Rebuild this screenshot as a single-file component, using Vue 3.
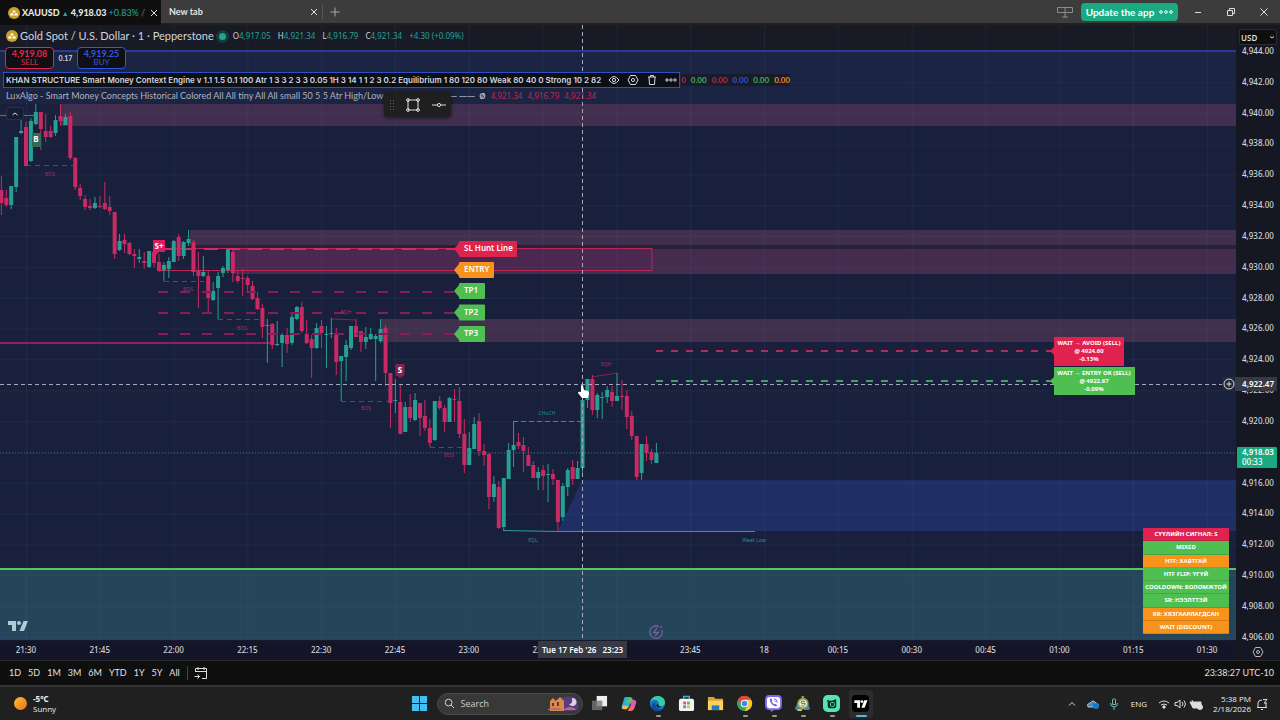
<script setup>
const START = 26
const STEP = 4.925
const FIRST = -5

// direction, high, body top, body bottom, low
const series = `
r176,190,203,215 r190,198,205,207 g186,186,205,209 g137,137,187,192 g120,131,133,134
r122,127,166,166 g118,121,161,162 g104,112,124,125 r112,112,129,150 r114,131,137,142
r126,131,137,138 g115,120,133,136 r104,116,121,125 g114,117,125,125 r112,116,158,160
r157,158,187,190 r184,188,196,200 r195,199,207,210 r199,206,208,210 g197,203,208,209
r196,206,207,208 r182,203,209,210 r196,207,211,215 r212,212,254,259 g234,241,250,251
r234,240,244,253 r242,243,254,255 r249,254,256,268 g249,257,259,263 r252,261,263,269
g251,251,267,268 r251,252,263,267 r254,262,271,272 g262,265,270,281 g257,261,269,278
g240,241,262,262 r234,237,256,261 g241,242,256,259 g230,239,243,246 r240,242,272,276
r252,271,276,308 g256,272,276,277 r271,276,298,312 g282,291,300,301 g272,276,288,319
g266,268,273,277 g249,250,270,273 r249,252,273,282 r270,276,281,283 r269,278,279,296
r276,278,285,291 r281,286,299,300 r292,298,309,310 r304,308,327,338 g319,325,326,363
r323,324,345,349 g321,344,345,346 g333,335,343,367 r328,335,344,353 g314,317,343,345
g306,307,319,320 r302,307,331,333 r320,334,343,344 r335,339,348,378 g323,328,348,349
r320,326,333,348 g326,334,335,368 g318,333,334,338 r328,333,362,375 g356,356,361,401
g340,345,357,381 g326,326,348,350 r319,326,337,337 r331,331,342,352 g327,337,342,349
g328,334,339,340 g334,336,339,381 g319,329,341,343 r325,328,373,386 r373,373,403,428
g379,400,401,413 r385,402,434,434 g402,407,432,432 r394,407,418,422 g393,400,420,421
r403,403,418,436 r400,416,428,431 r419,428,443,447 g401,401,440,441 r396,401,408,410
r405,408,422,432 g397,398,422,422 r389,399,400,422 r387,401,434,438 r419,434,465,473
g432,448,465,465 g417,424,449,449 r413,421,451,456 r444,451,455,466 r453,454,497,509
g476,484,497,502 r481,487,528,529 g478,478,527,531 g443,450,479,479 g422,445,450,467
r433,442,446,449 r437,445,451,472 r447,455,466,466 r461,465,478,478 g467,472,478,490
r465,470,476,490 g464,474,475,502 r469,474,479,485 r480,480,522,531 g483,486,517,521
g468,470,487,496 r460,467,479,485 g461,468,479,479 g396,400,468,476 g379,379,400,408
r375,379,410,415 g393,395,410,418 g392,397,398,419 g386,390,397,403 r386,392,401,407
g373,396,401,401 r380,396,397,410 r390,396,417,429 r411,416,436,440 r436,436,477,480
g444,444,473,480 r436,444,453,461 r449,452,460,464 g443,453,463,463`

const candles = series.trim().split(/\s+/).map((s, i) => {
  const [high, top, bottom, low] = s.slice(1).split(',').map(Number)
  return { x: START + (i + FIRST) * STEP, up: s[0] === 'g', high, top, bottom, low }
})

const prices = Array.from({ length: 20 }, (_, i) => '4,' + (944 - i * 2) + '.00')
const times = ['21:30', '21:45', '22:00', '22:15', '22:30', '22:45', '23:00', '23:15', '', '23:45', '18', '00:15', '00:30', '00:45', '01:00', '01:15', '01:30']
const hGrid = Array.from({ length: 20 }, (_, i) => 51.5 + i * 30.84)
const vGrid = Array.from({ length: 17 }, (_, i) => 26.5 + i * 73.8)

const tags = [
  { y: 249, w: 56, text: 'SL Hunt Line', fill: '#e0234e' },
  { y: 270, w: 33, text: 'ENTRY', fill: '#f7931a' },
  { y: 291, w: 24, text: 'TP1', fill: '#4fbf52' },
  { y: 312.5, w: 24, text: 'TP2', fill: '#4fbf52' },
  { y: 334, w: 24, text: 'TP3', fill: '#4fbf52' },
]
const tiny = [
  [50, 176, 'BOS', 'm'], [188, 291, 'BOS', 'm'], [242, 330, 'BOS', 'm'], [346, 314, 'EQH', 'm'],
  [366, 410, 'BOS', 'm'], [449, 457, 'BOS', 'm'], [606, 366, 'EQH', 'm'],
  [547, 415, 'CHoCH', 't'], [533, 542, 'EQL', 't'], [754, 542, 'Weak Low', 't'],
]
const status = [
  ['СҮҮЛИЙН СИГНАЛ: S', 'red'], ['MIXED', 'green'], ['HTF: ХАВТГАЙ', 'orange'], ['HTF FLIP: ҮГҮЙ', 'green'],
  ['COOLDOWN: БОЛОМЖТОЙ', 'green'], ['SR: НЭЭЛТТЭЙ', 'green'], ['RR: ХЯЗГААРЛАГДСАН', 'orange'], ['WAIT (DISCOUNT)', 'orange'],
]
const ranges = ['1D', '5D', '1M', '3M', '6M', 'YTD', '1Y', '5Y', 'All']
</script>

<template>
  <div class="app">
    <header class="titlebar">
      <div class="tab active">
        <svg class="coin" viewBox="0 0 12 12"><circle cx="6" cy="6" r="6" fill="#c9a227" /><path d="M4.4 5.4 5 3.6h2l.6 1.8zM2 8.4l.7-2.2h2.4l.6 2.2zM6.3 8.4l.6-2.2h2.4l.7 2.2z" fill="#fff" /></svg>
        <span class="tab-title"><b>XAUUSD</b> <i>▲</i> <b>4,918.03</b> <em>+0.83%</em> <small>/</small></span>
        <button class="x" aria-label="Close tab"><svg viewBox="0 0 10 10"><path d="M2 2l6 6M8 2l-6 6" /></svg></button>
      </div>
      <div class="tab second">
        <span class="tab-title">New tab</span>
        <button class="x" aria-label="Close new tab"><svg viewBox="0 0 10 10"><path d="M2 2l6 6M8 2l-6 6" /></svg></button>
      </div>
      <button class="x plus" aria-label="Add tab"><svg viewBox="0 0 10 10"><path d="M5 .5v9M.5 5h9" /></svg></button>
      <div class="window">
        <svg class="layout" viewBox="0 0 16 12"><path d="M.5 1.500h15v5H.5zM8 1.500v10M5 11h6" /></svg>
        <button class="update">Update the app <svg viewBox="0 0 14 4"><circle cx="2" cy="2" r="1.300" /><circle cx="7" cy="2" r="1.300" /><circle cx="12" cy="2" r="1.300" /></svg></button>
        <button class="win" aria-label="Minimize"><svg viewBox="0 0 10 10"><path d="M2 5.500h6" /></svg></button>
        <button class="win" aria-label="Restore"><svg viewBox="0 0 10 10"><path d="M1.500 3.500h5v5h-5zM3.500 3.500v-2h5v5h-2" /></svg></button>
        <button class="win" aria-label="Close"><svg viewBox="0 0 10 10"><path d="M1.500 1.500l7 7M8.500 1.500l-7 7" /></svg></button>
      </div>
    </header>

    <main class="chart">
      <section class="plot">
        <svg class="canvas" viewBox="0 25 1236 615" preserveAspectRatio="xMinYMin slice">
          <rect x="0" y="25" width="1236" height="615" fill="#18203c" />
          <rect x="0" y="25" width="1236" height="26" fill="#181b26" />
          <rect x="0" y="52" width="1236" height="52" fill="#1b2442" />
          <rect x="60" y="104" width="1176" height="22" fill="#422f50" />
          <rect x="190" y="230" width="1046" height="15" fill="#412f4e" />
          <rect x="190" y="245" width="1046" height="4" fill="#281f3e" />
          <rect x="232" y="249" width="1004" height="25" fill="#432c4d" />
          <rect x="232" y="249" width="420" height="21" fill="#4a2850" />
          <rect x="381" y="319" width="855" height="23" fill="#412f4e" />
          <path d="M582 480H1236V531H558z" fill="#1f2f63" />
          <rect x="0" y="569" width="1236" height="71" fill="#24455a" />
          <g class="grid">
            <line v-for="y in hGrid" :key="'h' + y" x1="0" x2="1236" :y1="y" :y2="y" />
            <line v-for="x in vGrid" :key="'v' + x" :x1="x" :x2="x" y1="25" y2="640" />
          </g>
          <rect x="0" y="50" width="1236" height="2" fill="#2c3a94" />
          <rect x="0" y="568" width="1236" height="2" fill="#5cc35c" />
          <path d="M0 115.500h37" stroke="#2a8c8c" />
          <path d="M0 343h270" stroke="#8c2060" stroke-width="2" />
          <path d="M160 248.500H652V270.500H160" fill="none" stroke="#b92855" stroke-width="1" />
          <path d="M160 249h296" stroke="#d42a5c" stroke-width="2" stroke-dasharray="14 8" />
          <path d="M332 319l24 1M592 377l25-4" stroke="#8c2059" />
          <path d="M503 530.500L557 531.500H755" fill="none" stroke="#2a9d9d" />
          <g stroke="#a0245f" stroke-dasharray="5 4"><path d="M26 165.500h47M164 281.500h40M218 319.500h42M341 401.500h49M430 447.500h36" /></g>
          <path d="M513 421.500h69" stroke="#2a9d8f" stroke-dasharray="5 3" />
          <g v-for="c in candles" :key="c.x" :fill="c.up ? '#26a092' : '#c92a63'">
            <rect :x="c.x - 0.5" :y="c.high" width="1" :height="c.low - c.high" />
            <rect :x="c.x - 2" :y="c.top" width="4" :height="Math.max(1, c.bottom - c.top)" />
          </g>
          <g stroke="#8b1a59" stroke-width="2" stroke-dasharray="10 12"><path d="M158 292h297M158 313h297M158 334h297" /></g>
          <path d="M656 351h396" stroke="#b52a5a" stroke-width="2" stroke-dasharray="7 8" />
          <path d="M656 381h396" stroke="#4a9c62" stroke-width="2" stroke-dasharray="7 8" />
          <path d="M0 453h1236" stroke="#27798a" stroke-dasharray="1 2" />
          <text v-for="t in tiny" :key="t[0]" :x="t[0]" :y="t[1]" :class="['tiny', t[3]]">{{ t[2] }}</text>

          <path d="M153 240h12v12h-6l-4 4v-4h-2z" fill="#d81f5c" /><text x="159" y="249" class="mark">S+</text>
          <path d="M395.500 364h9v11l-4.500 3-4.500-3z" fill="#83234f" /><text x="400" y="373" class="mark">S</text>
          <rect x="32" y="133" width="9" height="14" fill="#336b58" /><text x="36" y="142" class="mark">B</text>

          <g v-for="t in tags" :key="t.text">
            <path :d="`M454 ${t.y}l5-6v-1q0-1 1-1h${t.w}q1 0 1 1v14q0 1-1 1h-${t.w}q-1 0-1-1v-1z`" :fill="t.fill" />
            <text x="464" :y="t.y + 2" class="tag">{{ t.text }}</text>
          </g>

          <path d="M1050 351l4-4v-10h70v29h-70v-11z" fill="#e0234e" />
          <path d="M1050 381l4-4v-10h81v28h-81v-10z" fill="#4fbf52" />
          <g class="callout">
            <text x="1089" y="345">WAIT → AVOID (SELL)</text><text x="1089" y="353">@ 4924.60</text><text x="1089" y="361">-0.13%</text>
            <text x="1094" y="375">WAIT → ENTRY OK (SELL)</text><text x="1094" y="383">@ 4922.67</text><text x="1094" y="391">-0.09%</text>
          </g>

          <path d="M582.500 25V640M0 384.500H1054M1135 384.500H1222" stroke="#a4a8b8" stroke-dasharray="4 3" />
          <g transform="translate(656 632)" fill="none" stroke="#76609b" stroke-width="1.300"><path d="M3-5.500A6.300 6.300 0 1 0 6-2M1-4l-3.500 4.500h5L-1 4" /><circle cx="5" cy="-5" r="1" fill="#b04a86" stroke="none" /></g>
          <path d="M8 621h8v10h-4v-6H8zM23.500 621h4.500l-4 10h-4.500z" fill="#a9ced6" /><circle cx="19" cy="623" r="2" fill="#a9ced6" />
          <path d="M581 386q1-2 2 0l1 4 4 1q1.500 1 1 3l-1 4h-6l-4-5q0-2 3-1z" fill="#fff" />
        </svg>

        <div class="legend">
          <div class="symbol">
            <svg class="coin" viewBox="0 0 12 12"><circle cx="6" cy="6" r="6" fill="#c9a227" /><path d="M4.400 5.400 5 3.600h2l.6 1.800zM2 8.400l.7-2.200h2.400l.6 2.200zM6.300 8.400l.6-2.200h2.400l.7 2.200z" fill="#fff" /></svg>
            <h1>Gold Spot / U.S. Dollar · 1 · Pepperstone</h1>
            <span class="dot"></span>
            <p class="ohlc"><span>O<b>4,917.05</b></span><span>H<b>4,921.34</b></span><span>L<b>4,916.79</b></span><span>C<b>4,921.34</b></span><b>+4.30 (+0.09%)</b></p>
          </div>
          <div class="trade">
            <button class="sell"><b>4,919.08</b>SELL</button>
            <span>0.17</span>
            <button class="buy"><b>4,919.25</b>BUY</button>
          </div>
          <div class="study">
            <div class="picked">
              <span>KHAN STRUCTURE Smart Money Context Engine v 1.1 1.5 0.1 100 Atr 1 3 3 2 3 3 0.05 1H 3 14 1 1 2 3 0.2 Equilibrium 1 80 120 80 Weak 80 40 0 Strong 10 2 82</span>
              <button aria-label="Hide"><svg viewBox="0 0 12 12"><path d="M1 6q5-7 10 0-5 7-10 0z" /><circle cx="6" cy="6" r="1.600" /></svg></button>
              <button aria-label="Settings"><svg viewBox="0 0 12 12"><path d="M3.500 1.500h5L11 6l-2.500 4.500h-5L1 6z" /><circle cx="6" cy="6" r="1.600" /></svg></button>
              <button aria-label="Remove"><svg viewBox="0 0 12 12"><path d="M2 3h8M4.500 3V1.500h3V3M3 3l.5 7.500h5L9 3" /></svg></button>
              <button aria-label="More"><svg viewBox="0 0 12 12"><circle cx="2" cy="6" r="1.200" /><circle cx="6" cy="6" r="1.200" /><circle cx="10" cy="6" r="1.200" /></svg></button>
            </div>
            <p class="values"><i class="r">0</i><i class="g">0.00</i><i class="r">0.00</i><i class="b">0.00</i><i class="g">0.00</i><i class="o">0.00</i></p>
          </div>
          <div class="lux">
            <span>LuxAlgo - Smart Money Concepts Historical Colored All All tiny All All small 50 5 5 Atr High/Low 3</span>
            <p>— —— &nbsp;<b>Ø</b> <i>4,921.34</i> <i>4,916.79</i> <i>4,921.34</i></p>
          </div>
          <button class="fold" aria-label="Collapse legend"><svg viewBox="0 0 10 10"><path d="M2.500 6L5 4l2.500 2" /></svg></button>
        </div>

        <div class="floating">
          <svg class="grip" viewBox="0 0 6 14"><path d="M1.500 2v10M4.500 2v10" stroke-dasharray="1 2" /></svg>
          <button aria-label="Rectangle"><svg viewBox="0 0 16 16"><path d="M3 3h10v10H3z" /><circle cx="3" cy="3" r="1.400" /><circle cx="13" cy="3" r="1.400" /><circle cx="3" cy="13" r="1.400" /><circle cx="13" cy="13" r="1.400" /></svg></button>
          <button aria-label="Line"><svg viewBox="0 0 16 16"><path d="M1 8h5M10 8h5" /><circle cx="8" cy="8" r="1.600" /></svg></button>
        </div>

        <table class="status">
          <tbody><tr v-for="s in status" :key="s[0]"><td :class="s[1]">{{ s[0] }}</td></tr></tbody>
        </table>
      </section>

      <aside class="axis">
        <div class="prices"><span v-for="p in prices" :key="p" :class="{ covered: p === '4,918.00' }">{{ p }}</span></div>
        <label class="currency"><select aria-label="Currency"><option>USD</option></select><svg viewBox="0 0 8 8"><path d="M2 3.500l2 1.500 2-1.500" /></svg></label>
        <div class="cross"><button aria-label="Add alert"><svg viewBox="0 0 12 12"><circle cx="6" cy="6" r="5" /><path d="M6 3.500v5M3.500 6h5" /></svg></button><b>4,922.47</b></div>
        <div class="last"><b>4,918.03</b>00:33</div>
        <button class="gear" aria-label="Scale settings"><svg viewBox="0 0 12 12"><path d="M3.500 1.500h5L11 6l-2.500 4.500h-5L1 6z" /><circle cx="6" cy="6" r="1.500" /></svg></button>
      </aside>

      <div class="timeline">
        <div class="times"><span v-for="(t, i) in times" :key="i">{{ t }}</span></div>
        <div class="cursor-time">Tue 17 Feb '26 <span>23:23</span></div>
      </div>
    </main>

    <nav class="ranges">
      <button v-for="r in ranges" :key="r">{{ r }}</button>
      <button class="goto" aria-label="Go to date"><svg viewBox="0 0 14 14"><path d="M1.500 6V2.500h11v10H8M1.500 5.500h11M4 1v3M10 1v3M.5 10.500h5M3.500 8.500l2 2-2 2" /></svg></button>
      <time>23:38:27 UTC-10</time>
    </nav>

    <footer class="taskbar">
      <div class="weather"><span class="sun"></span><p><b>-5°C</b>Sunny</p></div>
      <div class="apps">
        <button aria-label="Start"><svg viewBox="0 0 18 18"><path d="M1 1h7.500v7.500H1zM9.500 1H17v7.500H9.500zM1 9.500h7.500V17H1zM9.500 9.500H17V17H9.500z" fill="#43bdf2" /></svg></button>
        <label class="search">
          <svg viewBox="0 0 12 12"><circle cx="5" cy="5" r="3.700" /><path d="M7.700 7.700L11 11" /></svg>
          <input type="text" placeholder="Search" aria-label="Search" />
          <svg class="art" viewBox="0 0 34 18"><path d="M3 14Q10 2 20 2q10-2 13 6t-8 8H4z" fill="#5b3a80" /><path d="M5 16V6l3-3 3 3 4-4 4 4v10z" fill="#d98b4a" /><path d="M7 8h2v3H7zM12 7h2v4h-2z" fill="#6b3324" /><path d="M2 15q8-5 16 0 6-6 14 0z" fill="#b96b72" /><path d="M27 3a4 4 0 1 1-3 6q4 0 3-6" fill="#d9d0f2" /></svg>
        </label>
        <button aria-label="Task view"><svg viewBox="0 0 18 18"><path d="M6 1h11v11H6z" fill="#eee" /><path d="M1 6h11v10H1z" fill="#777" opacity=".8" /></svg></button>
        <button aria-label="Copilot"><svg viewBox="0 0 18 18"><path d="M6 2h5q2 0 1 3l-2 7q-1 3-3 3H4q-3 0-2-4l2-6q0-3 2-3" fill="#28a9e0" /><path d="M9 3h3q2 0 1 3l-1 3H5z" fill="#54c66b" /><path d="M12 5h2q4 0 3 4l-2 5q-1 3-3 3H8q2 0 3-4z" fill="#d65cc0" /><path d="M3 11h6l-2 4H4q-3 0-1-4" fill="#f4b63d" /><path d="M8 17l3-5h5l-1 2q-1 3-3 3z" fill="#f3695c" /></svg></button>
        <button class="on" aria-label="Edge"><svg viewBox="0 0 18 18"><circle cx="9" cy="9" r="8" fill="#1475c8" /><path d="M1 9C2-2 17-1 17 8q0 4-5 4-3 0-2-3 0-4-4-4-4 0-5 4" fill="#39cba0" /><path d="M7 8q-2 7 7 7-3 2-6 2-6-1-5-6 1-3 4-3" fill="#0d4b99" /><path d="M10 9q-1 3 3 3-3 3-5 0-1-2 2-3" fill="#202020" /></svg></button>
        <button aria-label="Store"><svg viewBox="0 0 18 18"><path d="M6 4V1.500h6V4" fill="none" stroke="#42aee8" stroke-width="1.500" /><rect x="1" y="4" width="16" height="13" rx="2" fill="#f3f3f3" /><path d="M5.500 7h3v3h-3z" fill="#e65a3a" /><path d="M9.500 7h3v3h-3z" fill="#70b33e" /><path d="M5.500 11h3v3h-3z" fill="#35a0dc" /><path d="M9.500 11h3v3h-3z" fill="#f0b82f" /></svg></button>
        <button aria-label="Files"><svg viewBox="0 0 18 18"><path d="M1 2h6l2 2h8v12H1z" fill="#dba52c" /><path d="M1 6h16v10H1z" fill="#fad35e" /><path d="M5 11h8v5H5z" fill="#2a79bd" /></svg></button>
        <button class="on" aria-label="Chrome"><svg viewBox="0 0 18 18"><circle cx="9" cy="9" r="8" fill="#31a852" /><path d="M2 5a8 8 0 0 1 14 0H9L6 10z" fill="#e8453a" /><path d="M9 17a8 8 0 0 0 7-12H9l4 5z" fill="#f8c82f" /><circle cx="9" cy="9" r="4" fill="#fff" /><circle cx="9" cy="9" r="3" fill="#4286ed" /></svg></button>
        <button class="on" aria-label="Viber"><svg viewBox="0 0 18 18"><path d="M4 0h10q4 0 4 5v6q0 5-6 5h-2l-4 2v-2q-6 0-6-5V5q0-5 4-5" fill="#7b66ef" /><path d="M5 2h8q3 0 3 3v6q0 3-4 3H6q-4 0-4-3V5q0-3 3-3" fill="#fff" /><path d="M5.500 4q1-1 2 1 .5 1-.5 1.500Q8 9 10 10q1-1 2 0 1.500 1 0 2-4 0-6.500-5-.5-2 0-3" fill="#6a56db" /><path d="M9.500 4q3 0 3.500 4M10 6q1 .5 1 1.500" fill="none" stroke="#6a56db" /></svg></button>
        <button class="on" aria-label="Wallet"><svg viewBox="0 0 18 18"><path d="M1 14l3-6 4 8H2zM17 14l-3-6-4 8h6z" fill="#3f7fc0" /><path d="M8 1h3l-1 3H8z" fill="#78a94a" /><circle cx="9.500" cy="9" r="6" fill="#90a95a" /><circle cx="9.500" cy="9" r="4" fill="#e9e7d0" /><path d="M11.500 7q-4-1.500-4 .5t3 1.500-.5 2.500H8" fill="none" stroke="#586d35" /><path d="M3 15h6l-1 2H4z" fill="#ecc546" /></svg></button>
        <button class="on" aria-label="Recorder"><svg viewBox="0 0 18 18"><rect x="0" y="0" width="18" height="18" rx="5" fill="#58e3b2" /><path d="M4 5q5 2 8 0 2-2 2 1v6q0 2-2 2H7q-2 0-2-2V8z" fill="#122d27" /><rect x="8" y="8" width="4" height="4" rx="1" fill="none" stroke="#58e3b2" /></svg></button>
        <button class="on current" aria-label="TradingView"><svg viewBox="0 0 18 18"><rect x="0" y="0" width="18" height="18" rx="4" fill="#000" /><path d="M2.500 5.500h6v8H5.500v-5h-3zM13 5.500h3.500l-3.200 8H10z" fill="#fff" /><circle cx="10.500" cy="7" r="1.500" fill="#fff" /></svg></button>
      </div>
      <div class="tray">
        <div class="icons">
          <svg viewBox="0 0 14 12"><path d="M4 7.500l3-3 3 3" /></svg>
          <svg viewBox="0 0 14 12"><path d="M2 9q-2-3 2-4 3-4 6 0 4 1 2 4z" fill="#4b86b5" stroke="#a7c5da" /><circle cx="10" cy="8" r="3" fill="#1679ce" stroke="none" /></svg>
          <svg viewBox="0 0 14 12"><path d="M5.500 1.500q1.500-1.500 3 0v5h-3zM3.500 5q0 4 3.500 4t3.500-4M7 9v3" stroke="#72b5c0" /></svg>
        </div>
        <span>ENG</span>
        <div class="system">
          <svg viewBox="0 0 14 12"><path d="M2 5q5-4 10 0M4 7q3-2 6 0" /><circle cx="7" cy="9" r="1.200" fill="#ddd" /></svg>
          <svg viewBox="0 0 14 12"><path d="M2 4.500h2L7 2v8L4 7.500H2zM9 4q2 2 0 4M11 2.500q3 3.500 0 7" /></svg>
          <svg viewBox="0 0 14 12"><path d="M1 4h11v6H4zM3 2l3 7" fill="#ddd" /><circle cx="11" cy="9" r="2.500" fill="#ddd" /></svg>
        </div>
        <p>5:38 PM<br />2/18/2026</p>
        <svg viewBox="0 0 14 12"><path d="M3 9V5q0-3 4-3M11 5v4M2 9.500h10M6 11.500h2M8 1.500h4L9 5h3" /></svg>
      </div>
    </footer>
  </div>
</template>

<style>
html, body { margin: 0; background: #0f0f0f; }
</style>

<style scoped>
* { box-sizing: border-box; }
.app { display: flex; flex-direction: column; height: 100vh; overflow: hidden; color: #d1d3da; font: 9px/12px "Trebuchet MS", Lato, "Noto Sans", sans-serif; }
button { font: inherit; color: inherit; background: none; border: 0; padding: 0; margin: 0; display: flex; align-items: center; justify-content: center; }
svg { display: block; flex: none; }
p, h1 { margin: 0; }
i, em { font-style: normal; }

.titlebar { display: flex; align-items: stretch; height: 25px; flex: none; background: #3c3c3c; border-bottom: 2px solid #202020; }
.tab { display: flex; align-items: center; gap: 2px; font-weight: 700; white-space: nowrap; color: #e4e4e4; }
.tab.active { width: 161px; background: #0f0f0f; padding-left: 8px; margin-bottom: -2px; }
.tab.second { width: 161px; padding-left: 8px; }
.tab-title { flex: 1; }
.active i { color: #22ab94; font-size: 7px; }
.active em { color: #22ab94; font-weight: 400; }
.active small { color: #5c6068; font-size: 9px; }
.active .x { width: 14px; }
.coin { width: 12px; height: 12px; }
.x { width: 16px; height: 16px; align-self: center; }
.x svg { width: 10px; height: 10px; }
.x path, .win path { fill: none; stroke: #ddd; stroke-width: 1; }
.plus { border-left: 1px solid #575757; width: 24px; }
.plus path { stroke: #aaa; }
.window { margin-left: auto; display: flex; align-items: center; }
.layout { width: 16px; height: 12px; fill: none; stroke: #8c8c8c; margin-right: 8px; }
.update { background: #19aa82; color: #fff; border-radius: 4px; height: 18px; width: 97px; font-weight: 700; font-size: 10px; gap: 5px; margin-right: 3px; white-space: nowrap; }
.update svg { width: 14px; height: 4px; fill: none; stroke: #fff; stroke-width: 1; }
.win { width: 33px; height: 20px; }
.win svg { width: 10px; height: 10px; }

.chart { flex: 1; min-height: 0; display: grid; grid-template-columns: 1fr 44px; grid-template-rows: 1fr 20px; }
.plot { position: relative; overflow: hidden; }
.canvas { position: absolute; inset: 0; width: 100%; height: 100%; font-family: "Noto Sans", sans-serif; }
.grid line { stroke: #8c9bd0; stroke-opacity: .08; }
.tiny { font-size: 5px; text-anchor: middle; }
.tiny.m { fill: #a0306c; }
.tiny.t { fill: #2d8d93; }
.mark { font-size: 8px; font-weight: 700; fill: #fff; text-anchor: middle; }
.tag { font-size: 8px; font-weight: 600; fill: #fff; }
.callout text { font-size: 6px; font-weight: 700; fill: #fff; text-anchor: middle; }

.legend { position: absolute; inset: 0 0 auto 0; white-space: nowrap; }
.symbol { display: flex; align-items: center; height: 22px; padding-left: 6px; }
.symbol h1 { font-size: 11px; font-weight: 400; margin: 0 5px 0 2px; }
.dot { width: 7px; height: 7px; border-radius: 50%; background: #22a58b; box-shadow: 0 0 0 3px #173b3e; }
.ohlc { display: flex; gap: 7px; margin-left: 7px; font: 8px/12px "Noto Sans", sans-serif; }
.ohlc b { color: #26a092; font-weight: 400; }
.trade { display: flex; align-items: center; height: 22px; padding-left: 5px; }
.trade span { width: 23px; text-align: center; font-size: 7px; font-weight: 700; }
.trade button { width: 49px; height: 22px; flex-direction: column; border: 1px solid; border-radius: 4px; background: #101014; line-height: 9px; font-size: 8px; }
.trade b { font-size: 9px; }
.sell { color: #e0284a; }
.buy { color: #3156e0; }
.study { display: flex; align-items: center; margin-top: 3px; height: 16px; }
.picked { display: flex; align-items: center; height: 16px; margin-left: 3px; padding: 0 2px; gap: 7px; border: 1px solid #2f4fc4; background: #0d0f16; color: #d4d6de; font-family: Inter, sans-serif; font-size: 8px; font-weight: 600; }
.picked svg { width: 12px; height: 12px; fill: none; stroke: #d8dae2; }
.values { display: flex; gap: 5px; margin-left: 1px; font-weight: 700; font-size: 8px; background: #181c2a; }
.r { color: #b8264e; } .g { color: #45ad5a; } .b { color: #2f52d8; } .o { color: #e78b22; }
.lux { display: flex; align-items: center; height: 16px; padding-left: 6px; color: #afb2bf; }
.lux span { width: 379px; }
.lux p { margin-left: 64px; font: 8px/12px "Noto Sans", sans-serif; }
.lux i { color: #bc2856; margin-left: 3px; }
.fold { position: absolute; left: 6px; top: 82px; width: 18px; height: 13px; background: #161d33; border: 1px solid #2c3246; border-radius: 2px; }
.fold svg { width: 10px; height: 10px; fill: none; stroke: #ddd; }
.floating { position: absolute; left: 384px; top: 67px; width: 67px; height: 25px; display: flex; align-items: center; gap: 9px; padding-left: 5px; background: #1f1f1f; border-radius: 3px; box-shadow: 0 1px 4px #0008; }
.floating .grip { width: 6px; height: 14px; stroke: #666; }
.floating button svg { width: 16px; height: 16px; fill: none; stroke: #ddd; }
.floating button { width: 17px; }
.status { position: absolute; right: 6px; bottom: 6px; width: 88px; height: 106px; border-spacing: 1px 0; color: #fff; font: 700 6px/10px "Noto Sans", sans-serif; text-align: center; white-space: nowrap; }
.status td { padding: 0; border-bottom: 1px solid #0002; }
.status .red { background: #e0234e; } .status .green { background: #4fbf52; } .status .orange { background: #f7931a; }

.axis { grid-row: 1 / 3; grid-column: 2; position: relative; display: flex; flex-direction: column; background: #151723; font: 500 8px/12px "Noto Sans", sans-serif; }
.prices { flex: 1; display: flex; flex-direction: column; justify-content: space-between; padding: 20px 0 0 6px; }
.prices span { height: 12px; }
.prices .covered { visibility: hidden; }
.currency { position: absolute; top: 4px; left: 3px; right: 3px; height: 16px; }
.currency select { appearance: none; width: 100%; height: 100%; background: #0f0f0f; border: 1px solid #2e2e2e; border-radius: 2px; color: #ddd; font: 600 8px "Noto Sans", sans-serif; padding: 0 1px; }
.currency svg { position: absolute; right: 1px; top: 4px; width: 8px; height: 8px; fill: none; stroke: #ddd; }
.cross { position: absolute; right: 3px; top: 352px; height: 14px; display: flex; align-items: center; background: #363a45; color: #fff; padding-right: 3px; }
.cross button { width: 13px; height: 14px; margin-right: 7px; background: #232838; }
.cross svg { width: 12px; height: 12px; fill: none; stroke: #ddd; }
.cross b, .last b { font-weight: 600; display: block; }
.last { position: absolute; left: 1px; right: 3px; top: 422px; height: 21px; padding-left: 5px; line-height: 10px; background: #19aa82; color: #fff; border-radius: 1px; }
.gear { height: 17px; }
.gear svg { width: 12px; height: 12px; fill: none; stroke: #bbb; }

.timeline { grid-column: 1; grid-row: 2; position: relative; overflow: hidden; background: #141528; border-top: 1px solid #171a2c; font: 500 8px/18px "Noto Sans", sans-serif; }
.times { display: grid; grid-template-columns: repeat(17, 1fr); margin: 0 -8px 0 -11px; text-align: center; }
.cursor-time { position: absolute; left: 538px; top: 0; width: 89px; height: 17px; background: #363a45; color: #fff; text-align: center; font-weight: 600; white-space: nowrap; }
.cursor-time span { margin-left: 4px; }

.ranges { display: flex; align-items: center; flex: none; height: 25px; padding: 0 6px 0 9px; gap: 7px; background: #0f0f0f; border-top: 1px solid #292929; color: #e0e0e0; }
.goto { border-left: 1px solid #444; padding-left: 6px; height: 14px; }
.goto svg { width: 14px; height: 14px; fill: none; stroke: #ddd; }
.ranges time { margin-left: auto; }

.taskbar { flex: none; height: 35px; display: grid; grid-template-columns: 1fr auto 1fr; align-items: center; background: #202020; border-top: 2px solid #343434; color: #eee; font-family: "Open Sans", sans-serif; font-size: 8px; line-height: 10px; }
.weather { display: flex; align-items: center; gap: 6px; padding-left: 14px; }
.weather b { display: block; }
.sun { width: 13px; height: 13px; border-radius: 50%; background: linear-gradient(135deg, #ffc03c, #ee6d12); }
.apps { display: flex; align-items: center; gap: 5px; }
.apps button { position: relative; width: 24px; height: 28px; }
.apps button svg { width: 17px; height: 17px; }
.on::after { content: ""; position: absolute; bottom: 1px; left: 10px; width: 5px; height: 2px; border-radius: 1px; background: #999; }
.apps .current { background: #2c2c2c; border-radius: 3px; }
.current::after { left: 7px; width: 11px; background: #52b8ea; }
.search { display: flex; align-items: center; width: 146px; height: 22px; padding: 0 3px 0 6px; border: 1px solid #4b4b4b; border-radius: 11px; background: #383838; }
.search svg { width: 11px; height: 11px; fill: none; stroke: #ddd; }
.search .art { width: 34px; height: 18px; stroke: none; }
.search input { flex: 1; min-width: 0; border: 0; outline: 0; background: none; color: #ddd; font: 9px "Open Sans", sans-serif; padding: 0 6px; }
.search input::placeholder { color: #ccc; opacity: 1; }
.tray { display: flex; align-items: center; justify-content: flex-end; gap: 4px; padding-right: 11px; }
.tray svg { width: 14px; height: 12px; fill: none; stroke: #ddd; }
.icons { display: flex; gap: 7px; }
.system { display: flex; gap: 2px; }
.tray span { margin: 0 6px; }
.tray p { text-align: right; margin-left: 6px; }
</style>
